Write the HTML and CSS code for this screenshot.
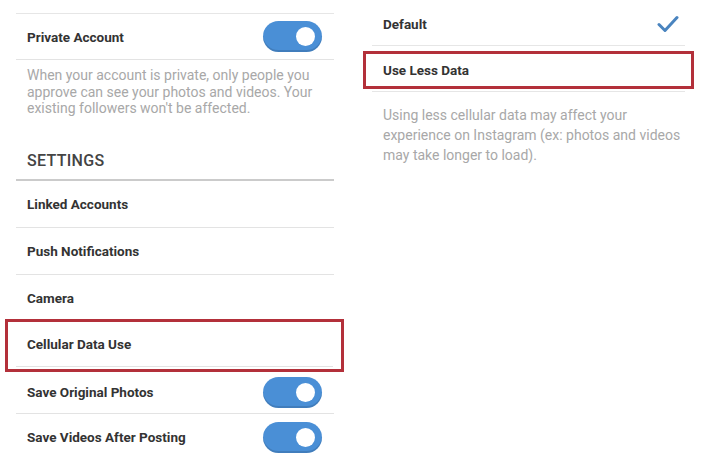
FILE: index.html
```html
<!DOCTYPE html>
<html lang="en">
<head>
    <meta charset="UTF-8">
    <title>Instagram settings</title>
    <link rel="stylesheet" href="styles.css">
</head>
<body>
    <div class="page">
        <!-- left: options list -->
        <div class="col-left">
            <div class="row row-top">
                <span class="label">Private Account</span>
                <span class="toggle"><span class="knob"></span></span>
            </div>
            <p class="note note-left">When your account is private, only people you approve can see your photos and videos. Your existing followers won't be affected.</p>

            <h2 class="section">SETTINGS</h2>

            <div class="row"><span class="label">Linked Accounts</span></div>
            <div class="row"><span class="label">Push Notifications</span></div>
            <div class="row row-plain"><span class="label">Camera</span></div>

            <div class="mark mark-left">
                <div class="row row-marked"><span class="label">Cellular Data Use</span></div>
            </div>

            <div class="row row-short">
                <span class="label">Save Original Photos</span>
                <span class="toggle"><span class="knob"></span></span>
            </div>
            <div class="row row-plain">
                <span class="label">Save Videos After Posting</span>
                <span class="toggle"><span class="knob"></span></span>
            </div>
        </div>

        <!-- right: cellular data use -->
        <div class="col-right">
            <div class="choice">
                <span class="label">Default</span>
                <svg class="check" width="22" height="18" viewBox="0 0 22 18">
                    <path d="M2 9.5 L8 15.5 L20 2.5" fill="none" stroke="#4a84bf" stroke-width="3" stroke-linecap="round" stroke-linejoin="round"/>
                </svg>
            </div>
            <div class="mark mark-right">
                <span class="label">Use Less Data</span>
            </div>
            <div class="divider"></div>
            <p class="note note-right">Using less cellular data may affect your experience on Instagram (ex: photos and videos may take longer to load).</p>
        </div>
    </div>
</body>
</html>
```

FILE: styles.css
```css
* {
    margin: 0;
    padding: 0;
    box-sizing: border-box;
}

body {
    background: #fff;
    font-family: Roboto, 'Noto Sans', sans-serif;
    color: #333;
    width: 706px;
    height: 458px;
    overflow: hidden;
}

.page {
    display: flex;
    align-items: flex-start;
}

/* 左侧列表 */
.col-left {
    width: 318px;
    margin-left: 16px;
    margin-top: 13px;
    border-top: 1px solid #e6e6e6;
}

.row {
    display: flex;
    align-items: center;
    justify-content: space-between;
    height: 47px;
    padding: 0 11px;
    border-bottom: 1px solid #e3e3e3;
}

.row-top {
    height: 46px;
}

.row-plain {
    border-bottom: none;
}

.row-short {
    height: 42px;
}

.label {
    font-size: 13.5px;
    font-weight: 700;
    color: #333;
}

.toggle {
    width: 59px;
    height: 31px;
    border-radius: 16px;
    background: #4a8fd6;
    box-shadow: inset 0 -2px 0 rgba(0, 0, 0, 0.12);
    display: flex;
    align-items: center;
    justify-content: flex-end;
    padding-right: 7px;
    margin-right: 1px;
}

.knob {
    width: 19px;
    height: 19px;
    border-radius: 50%;
    background: #fff;
}

.note {
    font-size: 14px;
    color: #a8a8a8;
}

.note-left {
    padding: 7px 11px 0;
    line-height: 16.5px;
}

.section {
    margin-top: 34px;
    padding: 0 11px 8px;
    font-size: 16px;
    line-height: 20px;
    font-weight: 500;
    letter-spacing: 0.3px;
    color: #444;
    border-bottom: 2px solid #cbcbcb;
}

/* 红色标记框 */
.mark {
    border: 3px solid #b3303a;
}

.mark-left {
    margin: -3px -10px 0 -11px;
    padding: 0 8px 2px;
}

.row-marked {
    height: 45px;
}

.mark-left .row {
    padding: 0 11px;
}

/* 右侧 */
.col-right {
    width: 331px;
    margin-left: 29px;
}

.choice {
    display: flex;
    align-items: center;
    justify-content: space-between;
    height: 46px;
    margin: 0 9px;
    padding: 2px 6px 0 11px;
    border-bottom: 1px solid #e6e6e6;
}

.mark-right {
    display: flex;
    align-items: center;
    height: 38px;
    margin-top: 5px;
    padding-left: 17px;
}

.divider {
    height: 1px;
    margin: 2px 9px 0;
    background: #e6e6e6;
}

.note-right {
    margin-top: 13px;
    padding: 0 4px 0 20px;
    line-height: 20px;
}
```
